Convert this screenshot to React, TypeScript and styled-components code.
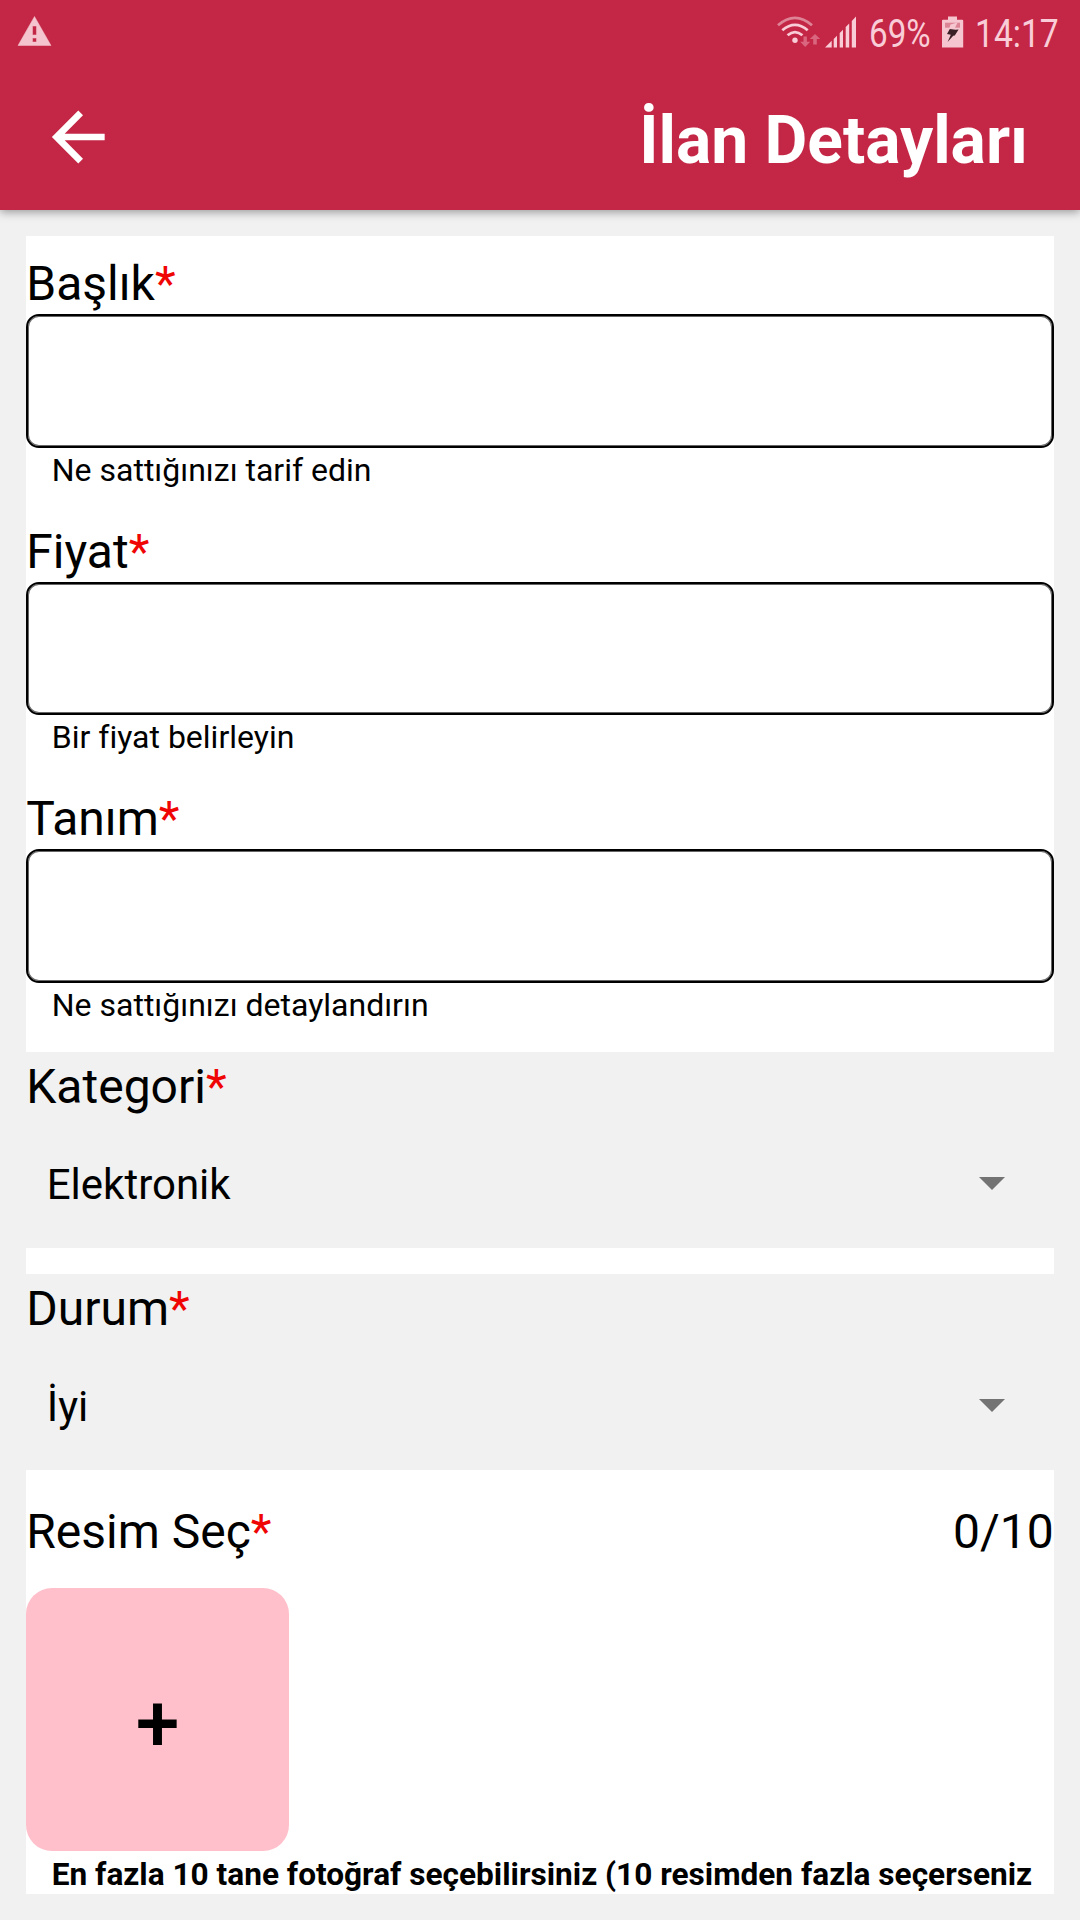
import React from 'react';
import styled, { createGlobalStyle } from 'styled-components';

const GlobalStyle = createGlobalStyle`
  * { box-sizing: border-box; }
  body { margin: 0; background: #f1f1f1; }
`;

const Screen = styled.div`
  width: 1080px;
  height: 1920px;
  overflow: hidden;
  display: flex;
  flex-direction: column;
  background: #f1f1f1;
  color: #000;
  font-family: Roboto, 'Noto Sans', sans-serif;
  font-variant-ligatures: none;
`;

const Header = styled.header`
  height: 210px;
  flex: none;
  background: #c42746;
  box-shadow: 0 2px 9px rgba(0, 0, 0, 0.38);
`;

const StatusBar = styled.div`
  height: 63px;
  padding: 0 21px 0 17px;
  display: flex;
  justify-content: space-between;
  align-items: center;
`;

const StatusGroup = styled.div`
  display: flex;
  align-items: center;
`;

const StatusIcon = styled.svg<{ $gap?: number }>`
  display: block;
  flex: none;
  margin-right: ${p => p.$gap ?? 0}px;
`;

const StatusText = styled.span<{ $width: number; $squeeze: number; $gap?: number }>`
  width: ${p => p.$width}px;
  margin-right: ${p => p.$gap ?? 0}px;
  font-size: 38px;
  line-height: 44px;
  padding-top: 5px;
  color: #f9cdd7;
  white-space: nowrap;
  transform: scaleX(${p => p.$squeeze});
  transform-origin: left center;
`;

const TitleBar = styled.div`
  height: 147px;
  padding: 0 52px 0 38px;
  display: flex;
  align-items: center;
  justify-content: space-between;
`;

const BackButton = styled.button`
  border: 0;
  padding: 0;
  background: none;
  display: flex;
`;

const Title = styled.h1`
  margin: 8px 0 0;
  font-size: 65.9px;
  line-height: 80px;
  font-weight: 700;
  color: #fff;
`;

const Form = styled.main`
  margin: 26px 26.25px 0;
  height: 1657.7px;
  padding-top: 18px;
  background: #fff;
  overflow: hidden;
`;

const Field = styled.div`
  margin-bottom: 29px;
  &:nth-of-type(3) { margin-bottom: 24.5px; }
`;

const Label = styled.label`
  display: block;
  font-size: 48px;
  line-height: 60px;
  white-space: nowrap;
`;

const Required = styled.span`
  color: #f00505;
`;

const TextInput = styled.input`
  display: block;
  width: 100%;
  height: 133.5px;
  border: 2px solid #000;
  border-radius: 13px;
  box-shadow: inset 0 0 0 1px rgba(0, 0, 0, 0.6);
  background: #fff;
  outline: none;
`;

const Hint = styled.div`
  padding-left: 25.5px;
  font-size: 32px;
  line-height: 45px;
  white-space: nowrap;
`;

const PickerSection = styled.section<{ $after: number }>`
  height: 196px;
  margin-bottom: ${p => p.$after}px;
  padding-top: 5px;
  background: #f1f1f1;
`;

const PickerRow = styled.div`
  height: 134px;
  padding: 0 49px 0 20.5px;
  display: flex;
  align-items: center;
  justify-content: space-between;
  font-size: 42px;
`;

const Caret = styled.svg`
  margin-bottom: 2px;
`;

const PhotoHeader = styled.div`
  display: flex;
  justify-content: space-between;
  font-size: 48px;
  line-height: 60px;
  margin-bottom: 26px;
`;

const AddPhoto = styled.button`
  width: 262.5px;
  height: 262.5px;
  border: 0;
  border-radius: 26px;
  padding: 9px 0 0;
  background: #ffc0cb;
  color: #000;
  display: flex;
  align-items: center;
  justify-content: center;
  font: 500 78.75px/92px Roboto, sans-serif;
`;

const PhotoHint = styled(Hint)`
  font-size: 31.6px;
  font-weight: 700;
  line-height: 48px;
`;

const FIELDS = [
  { label: 'Başlık', hint: 'Ne sattığınızı tarif edin' },
  { label: 'Fiyat', hint: 'Bir fiyat belirleyin' },
  { label: 'Tanım', hint: 'Ne sattığınızı detaylandırın' },
];

const PICKERS = [
  { label: 'Kategori', value: 'Elektronik', after: 26 },
  { label: 'Durum', value: 'İyi', after: 32 },
];

const Warning = () => (
  <StatusIcon width="35" height="31" viewBox="0 0 35 31">
    <path
      fill="#f4c5cf"
      fillRule="evenodd"
      d="M17.5 0.5 34 29.5H1Z M15.5 10v9h4v-9Z M15.5 22v4h4v-4Z"
      stroke="#f4c5cf"
      strokeWidth="0.5"
      strokeLinejoin="round"
    />
  </StatusIcon>
);

const Wifi = () => (
  <StatusIcon $gap={4} width="44" height="32" viewBox="777 15 44 32">
    <g fill="none" strokeWidth="2.8">
      <path stroke="#de8497" d="M778 24.3Q795 9.5 812 24.3" />
      <path stroke="#f9cdd7" d="M782.3 29.3Q795 18.5 807.7 29.3" />
      <path stroke="#f9cdd7" d="M787.6 34.3Q795 28 802.4 34.3" />
    </g>
    <circle cx="795" cy="39.2" r="2.7" fill="#f9cdd7" />
    <g fill="#d9667e">
      <path d="M803.5 35.5h3.4v5.2h3.3l-5 5.3-5-5.3h3.3Z" />
      <path d="M813.2 43.5h3.6v-5.4h3.4l-5.2-5-5.2 5h3.4Z" />
    </g>
  </StatusIcon>
);

const Signal = () => (
  <StatusIcon $gap={12} width="32" height="32" viewBox="825 15.5 32 32">
    <path
      fill="#f9cdd7"
      d="M825 47 831.7 40.3V47Z M833.7 38.5 837 35.2V47H833.7Z M839.7 32.5 843 29.2V47H839.7Z M845.7 26.5 849.2 23V47H845.7Z M851.8 20.4 856 16V47H851.8Z"
    />
  </StatusIcon>
);

const Battery = () => (
  <StatusIcon $gap={11} width="22" height="32" viewBox="942 15.5 22 32">
    <path fill="#f6c6d0" d="M948 16h9v3.2h5.2q1 0 1 1V47H942V20.2q0-1 1-1h5Z" />
    <path fill="#dc8496" d="M945 22.2h15v5H945Z" />
    <path fill="#f6c6d0" d="M950.5 24 957.5 22 954.5 28.5H949Z" />
    <path fill="#3a1f27" d="M949.8 28.5 955.5 29.3 958.6 29 954.8 35 953.2 35.2 947.6 41.6 950.8 34.2 947 33.5Z" />
  </StatusIcon>
);

export default function App() {
  return (
    <>
      <GlobalStyle />
      <Screen>
        <Header>
          <StatusBar>
            <Warning />
            <StatusGroup>
              <Wifi />
              <Signal />
              <StatusText $width={61} $squeeze={0.875} $gap={12}>69%</StatusText>
              <Battery />
              <StatusText $width={84} $squeeze={0.885}>14:17</StatusText>
            </StatusGroup>
          </StatusBar>
          <TitleBar>
            <BackButton aria-label="Geri">
              <svg width="80" height="80" viewBox="0 0 24 24">
                <path fill="#fff" d="M20,11V13H8L13.5,18.5L12.08,19.92L4.16,12L12.08,4.08L13.5,5.5L8,11H20Z" />
              </svg>
            </BackButton>
            <Title>İlan Detayları</Title>
          </TitleBar>
        </Header>
        <Form>
          {FIELDS.map(f => (
            <Field key={f.label}>
              <Label>{f.label}<Required>*</Required></Label>
              <TextInput />
              <Hint>{f.hint}</Hint>
            </Field>
          ))}
          {PICKERS.map(p => (
            <PickerSection key={p.label} $after={p.after}>
              <Label>{p.label}<Required>*</Required></Label>
              <PickerRow>
                <span>{p.value}</span>
                <Caret width="26" height="13" viewBox="0 0 26 13">
                  <path fill="#737373" d="M0 0H26L13 13Z" />
                </Caret>
              </PickerRow>
            </PickerSection>
          ))}
          <PhotoHeader>
            <span>Resim Seç<Required>*</Required></span>
            <span>0/10</span>
          </PhotoHeader>
          <AddPhoto>+</AddPhoto>
          <PhotoHint>En fazla 10 tane fotoğraf seçebilirsiniz (10 resimden fazla seçerseniz</PhotoHint>
        </Form>
      </Screen>
    </>
  );
}
